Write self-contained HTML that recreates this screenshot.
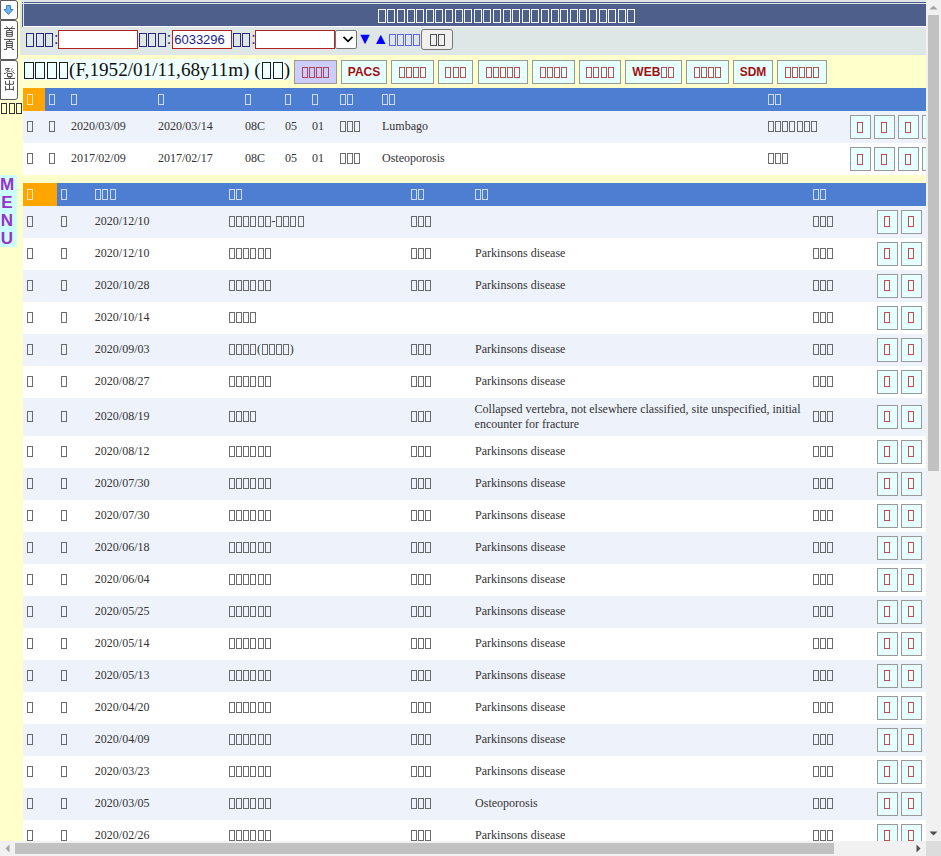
<!DOCTYPE html><html><head><meta charset="utf-8"><style>
*{margin:0;padding:0;box-sizing:border-box}
html,body{width:941px;height:856px;overflow:hidden;background:#FFFFCC;font-family:"Liberation Serif",serif;color:#333}
.a{position:absolute;white-space:nowrap}
i{display:inline-block;width:.6em;height:.882em;vertical-align:-.177em;position:relative;font-style:normal;--w:6px;--h:11px;--o:.72;--t:0px}
i:before{content:"";box-sizing:border-box;position:absolute;left:.05em;top:var(--t);width:var(--w);height:var(--h);border:1px solid currentColor;opacity:var(--o)}
.f16 i{--w:8px;--h:14px;--o:.95}
.f13 i{--w:7px;--h:12px;--o:.85}
.f18 i{--w:9.6px;--h:16.5px;--o:.95}
.sb{position:absolute;left:0;width:18px;background:#fff;border:1px solid #5a5a5a;border-radius:0 3px 3px 0}
.t{position:absolute;font-size:12px;line-height:15px;white-space:nowrap}
.h{position:absolute;font-size:12px;line-height:15px;white-space:nowrap;color:#fff}
.bk{position:absolute;left:23px;width:903px}
.btn{position:absolute;width:21px;height:23.5px;background:#E6FFFF;border:1px solid #999;color:#B22;font-size:12px}
.btn i{position:absolute;left:5.6px;top:5.3px;--o:.8}
.pb i{--t:-1px}
.dk i{--o:1}
.pb{position:absolute;top:60px;height:24px;background:#E6FFFF;border:1px solid #999;color:#A50F0F;font:bold 12px/22px "Liberation Sans",sans-serif;text-align:center;white-space:nowrap}
.ls{font-family:"Liberation Sans",sans-serif}
</style></head><body>
<div class="a" style="left:20px;top:0;width:906px;height:55px;background:#DFE6E6"></div>
<div class="a" style="left:24px;top:2px;width:902px;height:1px;background:#4F5F8C"></div>
<div class="a" style="left:22px;top:2px;width:1px;height:1px;background:#4F5F8C"></div>
<div class="a" style="left:22px;top:4px;width:1px;height:23px;background:#4F5F8C"></div>
<div class="a" style="left:24px;top:4px;width:902px;height:22px;background:#4F5F8C"></div>
<div class="a" style="left:23px;top:26px;width:903px;height:1px;background:#fff"></div>
<div class="a f16" style="left:377.1px;top:4px;font-size:16px;line-height:22px;color:#fff;height:22px"><i></i><i></i><i></i><i></i><i></i><i></i><i></i><i></i><i></i><i></i><i></i><i></i><i></i><i></i><i></i><i></i><i></i><i></i><i></i><i></i><i></i><i></i><i></i><i></i><i></i><i></i><i></i></div>
<div class="a f16 ls" style="left:25.2px;top:30px;font-size:16px;line-height:18px;color:#1C1C80"><i></i><i></i><i></i>:</div>
<div class="a" style="left:58px;top:30px;width:80px;height:19px;background:#fff;border:1px solid #B22222"></div>
<div class="a f16 ls" style="left:138.0px;top:30px;font-size:16px;line-height:18px;color:#1C1C80"><i></i><i></i><i></i>:</div>
<div class="a ls" style="left:172px;top:30px;width:60px;height:19px;background:#fff;border:1px solid #B22222;line-height:17px;color:#1A1A8A;padding-left:1.2px;font-size:13px">6033296</div>
<div class="a f16 ls" style="left:232.0px;top:30px;font-size:16px;line-height:18px;color:#1C1C80"><i></i><i></i>:</div>
<div class="a" style="left:255px;top:30px;width:80px;height:19px;background:#fff;border:1px solid #B22222"></div>
<div class="a" style="left:335px;top:30px;width:22px;height:19px;background:#fff;border:1px solid #767676;border-radius:2px"></div>
<svg class="a" style="left:342px;top:35px" width="12" height="9" viewBox="0 0 12 9"><path d="M1.5 1.8 L6 6.3 L10.5 1.8" fill="none" stroke="#000" stroke-width="1.8"/></svg>
<div class="a ls" style="left:357px;top:30px;font-size:16px;line-height:18px;color:#0000FF">&#9660;&#9650;<span class="f13" style="font-size:13.33px;color:#4A4AFF;position:relative;top:-1px"><i></i><i></i><i></i><i></i></span></div>
<div class="a ls f13" style="left:421px;top:29px;width:32px;height:21px;background:#EFEFEF;border:1px solid #767676;border-radius:3px;font-size:13.33px;line-height:17px;color:#333;text-align:center"><i></i><i></i></div>
<div class="a f18" style="left:23px;top:59px;width:267px;height:21px;background:#F0FFFF;font-size:19.2px;line-height:21px;color:#111"><i></i><i></i><i></i><i></i>(F,1952/01/11,68y11m) (<i></i><i></i>)</div>
<div class="pb" style="left:294px;width:43px;background:#CCCCFF"><i></i><i></i><i></i><i></i></div>
<div class="pb" style="left:341px;width:46px">PACS</div>
<div class="pb" style="left:391px;width:43px"><i></i><i></i><i></i><i></i></div>
<div class="pb" style="left:438px;width:35px"><i></i><i></i><i></i></div>
<div class="pb" style="left:478px;width:50px"><i></i><i></i><i></i><i></i><i></i></div>
<div class="pb" style="left:532px;width:43px"><i></i><i></i><i></i><i></i></div>
<div class="pb" style="left:579px;width:42px"><i></i><i></i><i></i><i></i></div>
<div class="pb" style="left:625px;width:57px">WEB<i></i><i></i></div>
<div class="pb" style="left:686px;width:43px"><i></i><i></i><i></i><i></i></div>
<div class="pb" style="left:733px;width:40px">SDM</div>
<div class="pb" style="left:777px;width:50px"><i></i><i></i><i></i><i></i><i></i></div>
<div class="bk" style="top:88px;height:23px;background:#4E7ED1"></div>
<div class="a" style="left:23px;top:88px;width:22px;height:23px;background:#FFA500"></div>
<div class="h" style="left:26.8px;top:91.0px"><i></i></div>
<div class="h" style="left:48.1px;top:91.0px"><i></i></div>
<div class="h" style="left:70.4px;top:91.0px"><i></i></div>
<div class="h" style="left:157.6px;top:91.0px"><i></i></div>
<div class="h" style="left:244.3px;top:91.0px"><i></i></div>
<div class="h" style="left:284.2px;top:91.0px"><i></i></div>
<div class="h" style="left:311.2px;top:91.0px"><i></i></div>
<div class="h" style="left:339.5px;top:91.0px"><i></i><i></i></div>
<div class="h" style="left:381.4px;top:91.0px"><i></i><i></i></div>
<div class="h" style="left:767.2px;top:91.0px"><i></i><i></i></div>
<div class="bk" style="top:111px;height:32px;background:#EEF2FA"></div>
<div class="t" style="left:26.4px;top:118.5px"><i></i></div>
<div class="t" style="left:48.1px;top:118.5px"><i></i></div>
<div class="t" style="left:71.0px;top:118.5px">2020/03/09</div>
<div class="t" style="left:158.0px;top:118.5px">2020/03/14</div>
<div class="t" style="left:245.0px;top:118.5px">08C</div>
<div class="t" style="left:285.0px;top:118.5px">05</div>
<div class="t" style="left:312.0px;top:118.5px">01</div>
<div class="t" style="left:339.5px;top:118.5px"><i></i><i></i><i></i></div>
<div class="t" style="left:382.0px;top:118.5px">Lumbago</div>
<div class="t" style="left:767.2px;top:118.5px"><i></i><i></i><i></i><i></i><i></i><i></i><i></i></div>
<div class="btn" style="left:850.0px;top:115.4px"><i></i></div>
<div class="btn" style="left:874.2px;top:115.4px"><i></i></div>
<div class="btn" style="left:898.2px;top:115.4px"><i></i></div>
<div class="btn" style="left:922.2px;top:115.4px"><i></i></div>
<div class="bk" style="top:143px;height:32px;background:#fff"></div>
<div class="t" style="left:26.4px;top:150.5px"><i></i></div>
<div class="t" style="left:48.1px;top:150.5px"><i></i></div>
<div class="t" style="left:71.0px;top:150.5px">2017/02/09</div>
<div class="t" style="left:158.0px;top:150.5px">2017/02/17</div>
<div class="t" style="left:245.0px;top:150.5px">08C</div>
<div class="t" style="left:285.0px;top:150.5px">05</div>
<div class="t" style="left:312.0px;top:150.5px">01</div>
<div class="t" style="left:339.5px;top:150.5px"><i></i><i></i><i></i></div>
<div class="t" style="left:382.0px;top:150.5px">Osteoporosis</div>
<div class="t" style="left:767.2px;top:150.5px"><i></i><i></i><i></i></div>
<div class="btn" style="left:850.0px;top:147.4px"><i></i></div>
<div class="btn" style="left:874.2px;top:147.4px"><i></i></div>
<div class="btn" style="left:898.2px;top:147.4px"><i></i></div>
<div class="btn" style="left:922.2px;top:147.4px"><i></i></div>
<div class="bk" style="top:183px;height:23px;background:#4E7ED1"></div>
<div class="a" style="left:23px;top:183px;width:34px;height:23px;background:#FFA500"></div>
<div class="h" style="left:26.8px;top:186.0px"><i></i></div>
<div class="h" style="left:60.2px;top:186.0px"><i></i></div>
<div class="h" style="left:94.6px;top:186.0px"><i></i><i></i><i></i></div>
<div class="h" style="left:228.3px;top:186.0px"><i></i><i></i></div>
<div class="h" style="left:410.1px;top:186.0px"><i></i><i></i></div>
<div class="h" style="left:474.1px;top:186.0px"><i></i><i></i></div>
<div class="h" style="left:812.2px;top:186.0px"><i></i><i></i></div>
<div class="bk" style="top:206px;height:32px;background:#EEF2FA"></div>
<div class="t" style="left:26.5px;top:213.5px"><i></i></div>
<div class="t" style="left:60.2px;top:213.5px"><i></i></div>
<div class="t" style="left:94.8px;top:213.5px">2020/12/10</div>
<div class="t" style="left:228.3px;top:213.5px"><i></i><i></i><i></i><i></i><i></i><i></i>-<i></i><i></i><i></i><i></i></div>
<div class="t" style="left:410.1px;top:213.5px"><i></i><i></i><i></i></div>
<div class="t" style="left:812.2px;top:213.5px"><i></i><i></i><i></i></div>
<div class="btn" style="left:877.2px;top:210.2px"><i></i></div>
<div class="btn" style="left:901.1px;top:210.2px"><i></i></div>
<div class="bk" style="top:238px;height:32px;background:#fff"></div>
<div class="t" style="left:26.5px;top:245.5px"><i></i></div>
<div class="t" style="left:60.2px;top:245.5px"><i></i></div>
<div class="t" style="left:94.8px;top:245.5px">2020/12/10</div>
<div class="t" style="left:228.3px;top:245.5px"><i></i><i></i><i></i><i></i><i></i><i></i></div>
<div class="t" style="left:410.1px;top:245.5px"><i></i><i></i><i></i></div>
<div class="t" style="left:812.2px;top:245.5px"><i></i><i></i><i></i></div>
<div class="t" style="left:475.1px;top:245.5px">Parkinsons disease</div>
<div class="btn" style="left:877.2px;top:242.2px"><i></i></div>
<div class="btn" style="left:901.1px;top:242.2px"><i></i></div>
<div class="bk" style="top:270px;height:32px;background:#EEF2FA"></div>
<div class="t" style="left:26.5px;top:277.5px"><i></i></div>
<div class="t" style="left:60.2px;top:277.5px"><i></i></div>
<div class="t" style="left:94.8px;top:277.5px">2020/10/28</div>
<div class="t" style="left:228.3px;top:277.5px"><i></i><i></i><i></i><i></i><i></i><i></i></div>
<div class="t" style="left:410.1px;top:277.5px"><i></i><i></i><i></i></div>
<div class="t" style="left:812.2px;top:277.5px"><i></i><i></i><i></i></div>
<div class="t" style="left:475.1px;top:277.5px">Parkinsons disease</div>
<div class="btn" style="left:877.2px;top:274.2px"><i></i></div>
<div class="btn" style="left:901.1px;top:274.2px"><i></i></div>
<div class="bk" style="top:302px;height:32px;background:#fff"></div>
<div class="t" style="left:26.5px;top:309.5px"><i></i></div>
<div class="t" style="left:60.2px;top:309.5px"><i></i></div>
<div class="t" style="left:94.8px;top:309.5px">2020/10/14</div>
<div class="t" style="left:228.3px;top:309.5px"><i></i><i></i><i></i><i></i></div>
<div class="t" style="left:812.2px;top:309.5px"><i></i><i></i><i></i></div>
<div class="btn" style="left:877.2px;top:306.2px"><i></i></div>
<div class="btn" style="left:901.1px;top:306.2px"><i></i></div>
<div class="bk" style="top:334px;height:32px;background:#EEF2FA"></div>
<div class="t" style="left:26.5px;top:341.5px"><i></i></div>
<div class="t" style="left:60.2px;top:341.5px"><i></i></div>
<div class="t" style="left:94.8px;top:341.5px">2020/09/03</div>
<div class="t" style="left:228.3px;top:341.5px"><i></i><i></i><i></i><i></i>(<i></i><i></i><i></i><i></i>)</div>
<div class="t" style="left:410.1px;top:341.5px"><i></i><i></i><i></i></div>
<div class="t" style="left:812.2px;top:341.5px"><i></i><i></i><i></i></div>
<div class="t" style="left:475.1px;top:341.5px">Parkinsons disease</div>
<div class="btn" style="left:877.2px;top:338.2px"><i></i></div>
<div class="btn" style="left:901.1px;top:338.2px"><i></i></div>
<div class="bk" style="top:366px;height:32px;background:#fff"></div>
<div class="t" style="left:26.5px;top:373.5px"><i></i></div>
<div class="t" style="left:60.2px;top:373.5px"><i></i></div>
<div class="t" style="left:94.8px;top:373.5px">2020/08/27</div>
<div class="t" style="left:228.3px;top:373.5px"><i></i><i></i><i></i><i></i><i></i><i></i></div>
<div class="t" style="left:410.1px;top:373.5px"><i></i><i></i><i></i></div>
<div class="t" style="left:812.2px;top:373.5px"><i></i><i></i><i></i></div>
<div class="t" style="left:475.1px;top:373.5px">Parkinsons disease</div>
<div class="btn" style="left:877.2px;top:370.2px"><i></i></div>
<div class="btn" style="left:901.1px;top:370.2px"><i></i></div>
<div class="bk" style="top:398px;height:38px;background:#EEF2FA"></div>
<div class="t" style="left:26.5px;top:408.5px"><i></i></div>
<div class="t" style="left:60.2px;top:408.5px"><i></i></div>
<div class="t" style="left:94.8px;top:408.5px">2020/08/19</div>
<div class="t" style="left:228.3px;top:408.5px"><i></i><i></i><i></i><i></i></div>
<div class="t" style="left:410.1px;top:408.5px"><i></i><i></i><i></i></div>
<div class="t" style="left:812.2px;top:408.5px"><i></i><i></i><i></i></div>
<div class="t" style="left:474.6px;top:402.0px">Collapsed vertebra, not elsewhere classified, site unspecified, initial<br>encounter for fracture</div>
<div class="btn" style="left:877.2px;top:405.2px"><i></i></div>
<div class="btn" style="left:901.1px;top:405.2px"><i></i></div>
<div class="bk" style="top:436px;height:32px;background:#fff"></div>
<div class="t" style="left:26.5px;top:443.5px"><i></i></div>
<div class="t" style="left:60.2px;top:443.5px"><i></i></div>
<div class="t" style="left:94.8px;top:443.5px">2020/08/12</div>
<div class="t" style="left:228.3px;top:443.5px"><i></i><i></i><i></i><i></i><i></i><i></i></div>
<div class="t" style="left:410.1px;top:443.5px"><i></i><i></i><i></i></div>
<div class="t" style="left:812.2px;top:443.5px"><i></i><i></i><i></i></div>
<div class="t" style="left:475.1px;top:443.5px">Parkinsons disease</div>
<div class="btn" style="left:877.2px;top:440.2px"><i></i></div>
<div class="btn" style="left:901.1px;top:440.2px"><i></i></div>
<div class="bk" style="top:468px;height:32px;background:#EEF2FA"></div>
<div class="t" style="left:26.5px;top:475.5px"><i></i></div>
<div class="t" style="left:60.2px;top:475.5px"><i></i></div>
<div class="t" style="left:94.8px;top:475.5px">2020/07/30</div>
<div class="t" style="left:228.3px;top:475.5px"><i></i><i></i><i></i><i></i><i></i><i></i></div>
<div class="t" style="left:410.1px;top:475.5px"><i></i><i></i><i></i></div>
<div class="t" style="left:812.2px;top:475.5px"><i></i><i></i><i></i></div>
<div class="t" style="left:475.1px;top:475.5px">Parkinsons disease</div>
<div class="btn" style="left:877.2px;top:472.2px"><i></i></div>
<div class="btn" style="left:901.1px;top:472.2px"><i></i></div>
<div class="bk" style="top:500px;height:32px;background:#fff"></div>
<div class="t" style="left:26.5px;top:507.5px"><i></i></div>
<div class="t" style="left:60.2px;top:507.5px"><i></i></div>
<div class="t" style="left:94.8px;top:507.5px">2020/07/30</div>
<div class="t" style="left:228.3px;top:507.5px"><i></i><i></i><i></i><i></i><i></i><i></i></div>
<div class="t" style="left:410.1px;top:507.5px"><i></i><i></i><i></i></div>
<div class="t" style="left:812.2px;top:507.5px"><i></i><i></i><i></i></div>
<div class="t" style="left:475.1px;top:507.5px">Parkinsons disease</div>
<div class="btn" style="left:877.2px;top:504.2px"><i></i></div>
<div class="btn" style="left:901.1px;top:504.2px"><i></i></div>
<div class="bk" style="top:532px;height:32px;background:#EEF2FA"></div>
<div class="t" style="left:26.5px;top:539.5px"><i></i></div>
<div class="t" style="left:60.2px;top:539.5px"><i></i></div>
<div class="t" style="left:94.8px;top:539.5px">2020/06/18</div>
<div class="t" style="left:228.3px;top:539.5px"><i></i><i></i><i></i><i></i><i></i><i></i></div>
<div class="t" style="left:410.1px;top:539.5px"><i></i><i></i><i></i></div>
<div class="t" style="left:812.2px;top:539.5px"><i></i><i></i><i></i></div>
<div class="t" style="left:475.1px;top:539.5px">Parkinsons disease</div>
<div class="btn" style="left:877.2px;top:536.2px"><i></i></div>
<div class="btn" style="left:901.1px;top:536.2px"><i></i></div>
<div class="bk" style="top:564px;height:32px;background:#fff"></div>
<div class="t" style="left:26.5px;top:571.5px"><i></i></div>
<div class="t" style="left:60.2px;top:571.5px"><i></i></div>
<div class="t" style="left:94.8px;top:571.5px">2020/06/04</div>
<div class="t" style="left:228.3px;top:571.5px"><i></i><i></i><i></i><i></i><i></i><i></i></div>
<div class="t" style="left:410.1px;top:571.5px"><i></i><i></i><i></i></div>
<div class="t" style="left:812.2px;top:571.5px"><i></i><i></i><i></i></div>
<div class="t" style="left:475.1px;top:571.5px">Parkinsons disease</div>
<div class="btn" style="left:877.2px;top:568.2px"><i></i></div>
<div class="btn" style="left:901.1px;top:568.2px"><i></i></div>
<div class="bk" style="top:596px;height:32px;background:#EEF2FA"></div>
<div class="t" style="left:26.5px;top:603.5px"><i></i></div>
<div class="t" style="left:60.2px;top:603.5px"><i></i></div>
<div class="t" style="left:94.8px;top:603.5px">2020/05/25</div>
<div class="t" style="left:228.3px;top:603.5px"><i></i><i></i><i></i><i></i><i></i><i></i></div>
<div class="t" style="left:410.1px;top:603.5px"><i></i><i></i><i></i></div>
<div class="t" style="left:812.2px;top:603.5px"><i></i><i></i><i></i></div>
<div class="t" style="left:475.1px;top:603.5px">Parkinsons disease</div>
<div class="btn" style="left:877.2px;top:600.2px"><i></i></div>
<div class="btn" style="left:901.1px;top:600.2px"><i></i></div>
<div class="bk" style="top:628px;height:32px;background:#fff"></div>
<div class="t" style="left:26.5px;top:635.5px"><i></i></div>
<div class="t" style="left:60.2px;top:635.5px"><i></i></div>
<div class="t" style="left:94.8px;top:635.5px">2020/05/14</div>
<div class="t" style="left:228.3px;top:635.5px"><i></i><i></i><i></i><i></i><i></i><i></i></div>
<div class="t" style="left:410.1px;top:635.5px"><i></i><i></i><i></i></div>
<div class="t" style="left:812.2px;top:635.5px"><i></i><i></i><i></i></div>
<div class="t" style="left:475.1px;top:635.5px">Parkinsons disease</div>
<div class="btn" style="left:877.2px;top:632.2px"><i></i></div>
<div class="btn" style="left:901.1px;top:632.2px"><i></i></div>
<div class="bk" style="top:660px;height:32px;background:#EEF2FA"></div>
<div class="t" style="left:26.5px;top:667.5px"><i></i></div>
<div class="t" style="left:60.2px;top:667.5px"><i></i></div>
<div class="t" style="left:94.8px;top:667.5px">2020/05/13</div>
<div class="t" style="left:228.3px;top:667.5px"><i></i><i></i><i></i><i></i><i></i><i></i></div>
<div class="t" style="left:410.1px;top:667.5px"><i></i><i></i><i></i></div>
<div class="t" style="left:812.2px;top:667.5px"><i></i><i></i><i></i></div>
<div class="t" style="left:475.1px;top:667.5px">Parkinsons disease</div>
<div class="btn" style="left:877.2px;top:664.2px"><i></i></div>
<div class="btn" style="left:901.1px;top:664.2px"><i></i></div>
<div class="bk" style="top:692px;height:32px;background:#fff"></div>
<div class="t" style="left:26.5px;top:699.5px"><i></i></div>
<div class="t" style="left:60.2px;top:699.5px"><i></i></div>
<div class="t" style="left:94.8px;top:699.5px">2020/04/20</div>
<div class="t" style="left:228.3px;top:699.5px"><i></i><i></i><i></i><i></i><i></i><i></i></div>
<div class="t" style="left:410.1px;top:699.5px"><i></i><i></i><i></i></div>
<div class="t" style="left:812.2px;top:699.5px"><i></i><i></i><i></i></div>
<div class="t" style="left:475.1px;top:699.5px">Parkinsons disease</div>
<div class="btn" style="left:877.2px;top:696.2px"><i></i></div>
<div class="btn" style="left:901.1px;top:696.2px"><i></i></div>
<div class="bk" style="top:724px;height:32px;background:#EEF2FA"></div>
<div class="t" style="left:26.5px;top:731.5px"><i></i></div>
<div class="t" style="left:60.2px;top:731.5px"><i></i></div>
<div class="t" style="left:94.8px;top:731.5px">2020/04/09</div>
<div class="t" style="left:228.3px;top:731.5px"><i></i><i></i><i></i><i></i><i></i><i></i></div>
<div class="t" style="left:410.1px;top:731.5px"><i></i><i></i><i></i></div>
<div class="t" style="left:812.2px;top:731.5px"><i></i><i></i><i></i></div>
<div class="t" style="left:475.1px;top:731.5px">Parkinsons disease</div>
<div class="btn" style="left:877.2px;top:728.2px"><i></i></div>
<div class="btn" style="left:901.1px;top:728.2px"><i></i></div>
<div class="bk" style="top:756px;height:32px;background:#fff"></div>
<div class="t" style="left:26.5px;top:763.5px"><i></i></div>
<div class="t" style="left:60.2px;top:763.5px"><i></i></div>
<div class="t" style="left:94.8px;top:763.5px">2020/03/23</div>
<div class="t" style="left:228.3px;top:763.5px"><i></i><i></i><i></i><i></i><i></i><i></i></div>
<div class="t" style="left:410.1px;top:763.5px"><i></i><i></i><i></i></div>
<div class="t" style="left:812.2px;top:763.5px"><i></i><i></i><i></i></div>
<div class="t" style="left:475.1px;top:763.5px">Parkinsons disease</div>
<div class="btn" style="left:877.2px;top:760.2px"><i></i></div>
<div class="btn" style="left:901.1px;top:760.2px"><i></i></div>
<div class="bk" style="top:788px;height:32px;background:#EEF2FA"></div>
<div class="t" style="left:26.5px;top:795.5px"><i></i></div>
<div class="t" style="left:60.2px;top:795.5px"><i></i></div>
<div class="t" style="left:94.8px;top:795.5px">2020/03/05</div>
<div class="t" style="left:228.3px;top:795.5px"><i></i><i></i><i></i><i></i><i></i><i></i></div>
<div class="t" style="left:410.1px;top:795.5px"><i></i><i></i><i></i></div>
<div class="t" style="left:812.2px;top:795.5px"><i></i><i></i><i></i></div>
<div class="t" style="left:475.1px;top:795.5px">Osteoporosis</div>
<div class="btn" style="left:877.2px;top:792.2px"><i></i></div>
<div class="btn" style="left:901.1px;top:792.2px"><i></i></div>
<div class="bk" style="top:820px;height:32px;background:#fff"></div>
<div class="t" style="left:26.5px;top:827.5px"><i></i></div>
<div class="t" style="left:60.2px;top:827.5px"><i></i></div>
<div class="t" style="left:94.8px;top:827.5px">2020/02/26</div>
<div class="t" style="left:228.3px;top:827.5px"><i></i><i></i><i></i><i></i><i></i><i></i></div>
<div class="t" style="left:410.1px;top:827.5px"><i></i><i></i><i></i></div>
<div class="t" style="left:812.2px;top:827.5px"><i></i><i></i><i></i></div>
<div class="t" style="left:475.1px;top:827.5px">Parkinsons disease</div>
<div class="btn" style="left:877.2px;top:824.2px"><i></i></div>
<div class="btn" style="left:901.1px;top:824.2px"><i></i></div>
<div class="a" style="left:0;top:0;width:18px;height:103px;background:#FFFFCC"></div>
<div class="sb" style="top:0;height:20px"></div>
<svg class="a" style="left:3px;top:4px" width="12" height="12" viewBox="0 0 12 12"><path d="M3.5 1.5h4v4h2.5l-4.5 5-4.5-5h2.5z" fill="#6CB6F0" stroke="#3C82C4" stroke-width="1"/></svg>
<div class="sb" style="top:20px;height:40px"></div>
<div class="sb" style="top:60px;height:40px"></div>
<svg class="a" style="left:0;top:0" width="18" height="100" viewBox="0 0 18 100" fill="none" stroke="#4d4d4d" stroke-width="1"><path d="M6.4 26.2L7.6 28M12.6 26.2L11.4 28M4 28.5H15M9.5 28.5V30.5M6.6 30.6h5.7v5.7h-5.7zM6.6 32.5h5.7M6.6 34.4h5.7"/><path d="M4 39.4H15M9.5 39.4V41.5M6.6 41.6h5.7v5.8h-5.7zM6.6 43.5h5.7M6.6 45.5h5.7M7.4 47.5L5.9 49.2M4 49.4H7M11.4 47.5L12.6 49.2M12.2 49.5H14"/><path d="M5.5 69.8V68.5H9.5L6.7 70.6L10.4 71.5M7.9 71.6L6.2 72.8M4 73.5H5.7M12.6 68.2L11.3 69.8M13.5 70.2v.6M11.4 70.8L14.6 73.6M7.5 73.5H12V76.5H7.5ZM8.6 76.6L9.1 78M10.9 76.6L10.4 78M4 78.5H15"/><path d="M9.5 80.3V89.4M5.5 81.1V84.3H13.4V81.1M5.5 86.2V90.6M13.4 86.2V90.6M5.5 89.4H13.4"/></svg>
<div class="t dk" style="left:0.4px;top:100.5px;color:#333;font-size:12.5px"><i></i><i></i><i></i></div>
<div class="a ls" style="left:0;top:175px;width:17px;height:72px;background:#CCFFFF;font-weight:bold;font-size:17px;line-height:18.1px;padding-right:3px;padding-top:.5px;color:#9932CC;text-align:center;white-space:normal">M<br>E<br>N<br>U</div>
<div class="a" style="left:926px;top:0;width:15px;height:841px;background:#F1F1F1"></div>
<div class="a" style="left:928px;top:15px;width:11px;height:456px;background:#C1C1C1"></div>
<svg class="a" style="left:926px;top:0" width="15" height="15"><path d="M3.5 9.5h8l-4-4z" fill="#A3A3A3"/></svg>
<svg class="a" style="left:926px;top:826px" width="15" height="15"><path d="M3.5 5.5h8l-4 4z" fill="#505050"/></svg>
<div class="a" style="left:0;top:841px;width:926px;height:15px;background:#F1F1F1"></div>
<div class="a" style="left:15px;top:843px;width:819px;height:11px;background:#C1C1C1"></div>
<svg class="a" style="left:0;top:841px" width="15" height="15"><path d="M9.5 3.5v8l-4-4z" fill="#A3A3A3"/></svg>
<svg class="a" style="left:911px;top:841px" width="15" height="15"><path d="M5.5 3.5v8l4-4z" fill="#505050"/></svg>
<div class="a" style="left:926px;top:841px;width:15px;height:15px;background:#DCDCDC"></div>
</body></html>
